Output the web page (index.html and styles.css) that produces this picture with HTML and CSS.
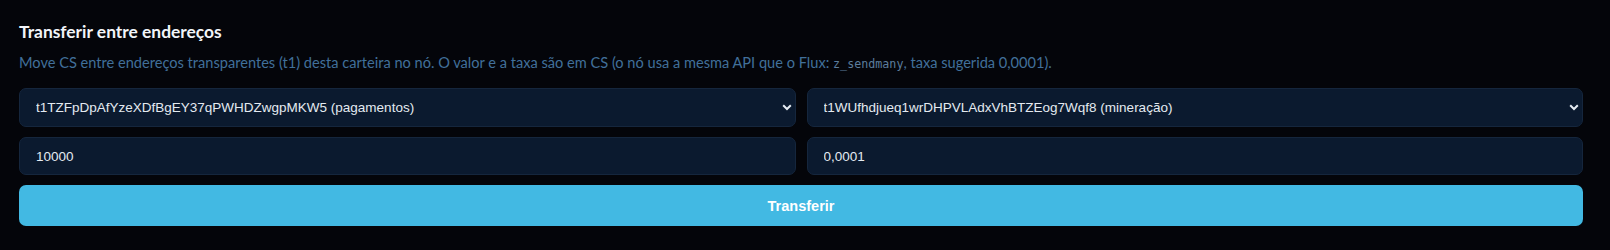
FILE: index.html
```html
<!DOCTYPE html>
<html lang="pt">
<head>
<meta charset="utf-8">
<title>Transferir entre endereços</title>
<link rel="stylesheet" href="styles.css">
</head>
<body>
<section class="card">
  <h2 class="title">Transferir entre endereços</h2>
  <p class="desc">Move CS entre endereços transparentes (t1) desta carteira no nó. O valor e a taxa são em CS (o nó usa a mesma API que o Flux: <code class="mono">z_sendmany</code>, taxa sugerida 0,0001).</p>
  <div class="form">
    <select class="field select">
      <option>t1TZFpDpAfYzeXDfBgEY37qPWHDZwgpMKW5 (pagamentos)</option>
    </select>
    <select class="field select">
      <option>t1WUfhdjueq1wrDHPVLAdxVhBTZEog7Wqf8 (mineração)</option>
    </select>
    <input class="field input" type="text" value="10000">
    <input class="field input" type="text" value="0,0001">
    <button class="btn" type="button">Transferir</button>
  </div>
</section>
</body>
</html>
```

FILE: styles.css
```css
html, body {
  margin: 0;
  padding: 0;
  background: #04050a;
}

.card {
  padding: 20px 27px 0 19px;
  font-family: "Lato", "Liberation Sans", sans-serif;
}

.title {
  margin: 0;
  font-size: 17.4px;
  line-height: 24px;
  font-weight: 700;
  color: #f2f5f9;
}

.desc {
  margin: 9px 0 0;
  font-size: 14.6px;
  line-height: 20px;
  color: #41709a;
}

.mono {
  font-family: "DejaVu Sans Mono", "Liberation Mono", monospace;
  font-size: 11.7px;
  color: #5c7d9c;
}

.form {
  margin-top: 14px;
  display: grid;
  grid-template-columns: 1fr 1fr;
  gap: 10px 11px;
}

.field {
  box-sizing: border-box;
  margin: 0;
  width: 100%;
  background-color: #0b1a2f;
  border: 1px solid #15263d;
  border-radius: 7px;
  color: #e4eaf1;
  font-family: "Liberation Sans", Arial, sans-serif;
  font-size: 13.5px;
  padding: 0 16px;
  outline: none;
}

.select {
  height: 39px;
  appearance: none;
  -webkit-appearance: none;
  background-image: url("data:image/svg+xml,%3Csvg xmlns='http://www.w3.org/2000/svg' width='10' height='7' viewBox='0 0 10 7'%3E%3Cpath d='M1.2 1.3 5 5 8.8 1.3' fill='none' stroke='%23e6ecf3' stroke-width='2'/%3E%3C/svg%3E");
  background-repeat: no-repeat;
  background-position: right 3px center;
  background-size: 10px 7px;
}

.input {
  height: 38px;
}

.btn {
  grid-column: 1 / -1;
  height: 41px;
  border: none;
  border-radius: 7px;
  background: #42b9e3;
  color: #ffffff;
  font-family: "Liberation Sans", Arial, sans-serif;
  font-weight: 700;
  font-size: 14.5px;
  cursor: pointer;
}
```
